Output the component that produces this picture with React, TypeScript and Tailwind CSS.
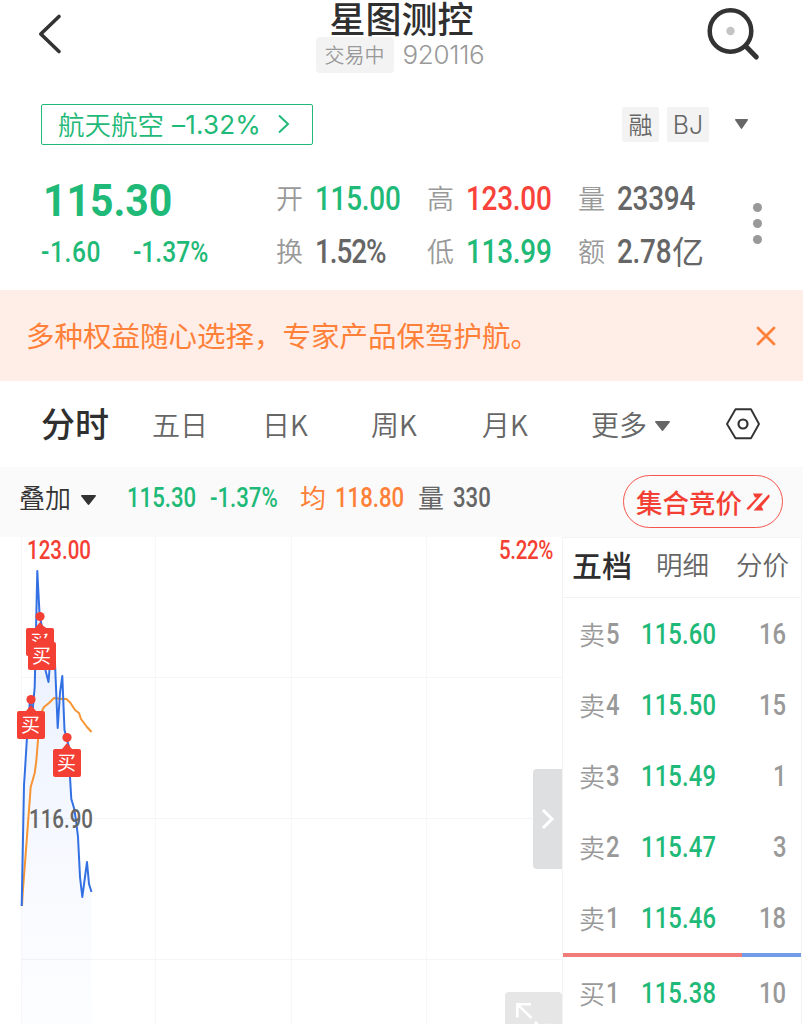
import type { ReactNode } from "react";

type Level = {
  label: string;
  price: string;
  volume: string;
};

type Marker = {
  x: number;
  y: number;
};

const SELL_LEVELS: Level[] = [
  { label: "卖5", price: "115.60", volume: "16" },
  { label: "卖4", price: "115.50", volume: "15" },
  { label: "卖3", price: "115.49", volume: "1" },
  { label: "卖2", price: "115.47", volume: "3" },
  { label: "卖1", price: "115.46", volume: "18" },
];

const BUY_LEVELS: Level[] = [{ label: "买1", price: "115.38", volume: "10" }];

// top-left of each trade marker, in chart coordinates
const MARKERS: Marker[] = [
  { x: 25.5, y: 75 },
  { x: 27.5, y: 89 },
  { x: 16.5, y: 158 },
  { x: 52.5, y: 196 },
];

const PRICE_POINTS =
  "21.7,369 24,248 25,233 27,200 30,163 32.5,175 34.7,150 36,93 37.3,34 39.5,76 42,91 43.5,123 45.7,134 48.5,145 50,126 55,126 57.7,191 60,156 62.3,139 64.5,193 69,210 70,240 71.3,262 74,271 76,283 78,300 80,340 82.3,360 87,325 89,347 91.5,355";

const AVERAGE_POINTS =
  "22,369 22.7,356 25,326 28,286 30.7,250 34.7,236 36.3,224 38,203 41.5,175 44,170 49,166 54,161 62,162 66.5,162 70.5,166 75,173 79,176 81,182 87,190 91.5,195";

function Num({ className = "", children }: { className?: string; children: ReactNode }) {
  return (
    <span className={`inline-block whitespace-nowrap font-['Roboto'] ${className}`}>
      <span className="inline-block origin-left scale-x-[0.82]">{children}</span>
    </span>
  );
}

function Caret({ className = "" }: { className?: string }) {
  return (
    <svg viewBox="0 0 14 10" preserveAspectRatio="none" className={className} fill="currentColor">
      <path d="M.8 0h12.400c.7 0 1 .8.600 1.300L7.700 9.500c-.4.5-1 .5-1.400 0L.2 1.300C-.2.8.100 0 .8 0z" />
    </svg>
  );
}

function Header() {
  return (
    <header className="relative flex h-[84px] flex-col items-center">
      <button type="button" className="absolute left-[36px] top-[12px]">
        <svg width="28" height="44" fill="none" stroke="#333" strokeWidth="3.6" strokeLinecap="round" strokeLinejoin="round">
          <path d="M23 4.500L4.800 22L23 39.500" />
        </svg>
      </button>
      <h1 className="h-[37px] text-[36px] font-medium leading-[35px] text-[#2f2f2f]">星图测控</h1>
      <div className="mr-[2px] flex h-9 items-center gap-[9px]">
        <span className="flex h-9 w-[78px] items-center justify-center rounded bg-[#f3f3f3] text-xl font-[350] text-[#999]">
          交易中
        </span>
        <span className="w-[83px] whitespace-nowrap font-['Inter'] text-[26px] font-light leading-9 tracking-[-0.3px] text-[#999]">
          920116
        </span>
      </div>
      <button type="button" className="absolute left-[704px] top-[5px]">
        <svg width="58" height="58" fill="none" stroke="#333">
          <circle cx="26.500" cy="26" r="20.800" strokeWidth="4.500" />
          <path d="M42 41.500L52.300 52" strokeWidth="5" strokeLinecap="round" />
          <circle cx="26.500" cy="26" r="4.200" fill="#c4c4c4" stroke="none" />
        </svg>
      </button>
    </header>
  );
}

function SectorRow() {
  return (
    <div className="flex h-[80px] items-center pl-[41px]">
      <div className="flex h-[41px] w-[272px] items-center rounded-[2px] border-[1.5px] border-[#1fb978] pl-4 text-[#1fb978]">
        <span className="text-[26.500px] font-[350]">航天航空</span>
        <span className="ml-[8px] w-[92px] whitespace-nowrap font-['Inter'] text-[26px] font-normal tracking-[0.2px]">
          –1.32%
        </span>
        <svg width="14" height="20" className="ml-[13px]" fill="none" stroke="currentColor" strokeWidth="2">
          <path d="M2 1.500L11 10L2 18.500" />
        </svg>
      </div>
      <div className="ml-[309px] flex items-center gap-2 text-[#666]">
        <span className="flex h-[35px] w-[37px] items-center justify-center rounded-[2px] bg-[#f3f3f3] text-2xl font-[350]">
          融
        </span>
        <span className="flex h-[35px] w-[42px] items-center justify-center rounded-[2px] bg-[#f3f3f3] pt-[3px] font-['Inter'] text-[25px] font-light">
          BJ
        </span>
      </div>
      <Caret className="ml-[26px] h-[10px] w-[13px] text-[#666]" />
    </div>
  );
}

function Stat({ label, tone, children }: { label: string; tone: string; children: ReactNode }) {
  return (
    <div className="flex h-[53px] items-center whitespace-nowrap">
      <span className="w-[39px] pb-[1px] text-[27px] font-[350] text-[#999]">{label}</span>
      <span className={`flex items-center ${tone}`}>{children}</span>
    </div>
  );
}

function Quote() {
  return (
    <section className="flex h-[126px] pt-2">
      <div className="w-[276px] text-[#1fb978]">
        <div className="h-[54px] pl-[43px] font-['Roboto'] text-[45px] font-bold leading-[57px]">
          <span className="inline-block origin-left scale-x-[0.91]">115.30</span>
        </div>
        <div className="flex h-[50px] items-center pl-[41px] text-[30px] font-medium">
          <Num className="w-[92px] tracking-[0.7px]">-1.60</Num>
          <Num>-1.37%</Num>
        </div>
      </div>
      <div className="grid h-[106px] grid-cols-[151px_151px_160px] text-[34px] font-medium tracking-[-0.3px]">
        <Stat label="开" tone="text-[#1fb978]"><Num>115.00</Num></Stat>
        <Stat label="高" tone="text-[#f9423a]"><Num>123.00</Num></Stat>
        <Stat label="量" tone="text-[#666]"><Num>23394</Num></Stat>
        <Stat label="换" tone="text-[#666]"><Num className="tracking-[-1.300px]">1.52%</Num></Stat>
        <Stat label="低" tone="text-[#1fb978]"><Num>113.99</Num></Stat>
        <Stat label="额" tone="text-[#666]">
          <Num className="w-[55px]">2.78</Num>
          <span className="pb-1 text-[32px] font-normal leading-10">亿</span>
        </Stat>
      </div>
      <div className="ml-[15px] mt-[31px] flex flex-col gap-[7px]">
        <i className="size-[9px] rounded-full bg-[#999]" />
        <i className="size-[9px] rounded-full bg-[#999]" />
        <i className="size-[9px] rounded-full bg-[#999]" />
      </div>
    </section>
  );
}

function Banner() {
  return (
    <div className="flex h-[91px] items-center justify-between bg-[#ffeee7] pl-[26px] pr-[27px] text-[#ff8038]">
      <p className="text-[28.500px] font-normal">多种权益随心选择，专家产品保驾护航。</p>
      <svg width="20" height="20" fill="none" stroke="currentColor" strokeWidth="2.700" strokeLinecap="round">
        <path d="M2 2L18 18M18 2L2 18" />
      </svg>
    </div>
  );
}

function PeriodTabs() {
  return (
    <nav className="flex h-[86px] items-center whitespace-nowrap text-[28px] font-[350] text-[#666]">
      <span className="ml-[41px] w-[111px] pb-[3px] text-[34px] font-medium text-[#2f2f2f]">分时</span>
      <span className="w-[110px]">五日</span>
      <span className="w-[109px]">日K</span>
      <span className="w-[111px]">周K</span>
      <span className="w-[109px]">月K</span>
      <span className="w-[64px]">更多</span>
      <Caret className="mt-[3px] h-[10px] w-[15px]" />
      <svg width="36" height="34" className="ml-[55px]" fill="none" stroke="#333" strokeWidth="1.900" strokeLinejoin="round">
        <path d="M10.500 2.200H26L34 17L26 31.300H10.500L2 17z" />
        <circle cx="18" cy="17" r="4.500" strokeWidth="2.200" />
      </svg>
    </nav>
  );
}

function InfoStrip() {
  return (
    <div className="flex h-[70px] items-start bg-[#fafafa] pl-[19px]">
      <div className="flex h-[62px] w-[604px] items-center whitespace-nowrap text-[27px] font-medium">
        <span className="w-[62px] pb-[3px] text-[26px] font-[350] text-[#333]">叠加</span>
        <Caret className="mt-[3px] h-[10px] w-[15px] text-[#333]" />
        <Num className="ml-[31px] w-[83px] pt-[1px] text-[#1fb978]">115.30</Num>
        <Num className="w-[90px] pt-[1px] text-[#1fb978]">-1.37%</Num>
        <span className="w-[35px] pb-[3px] text-[26px] font-normal text-[#ff8038]">均</span>
        <Num className="w-[83px] pt-[1px] text-[#ff8038]">118.80</Num>
        <span className="w-[35px] pb-[3px] text-[26px] font-normal text-[#666]">量</span>
        <Num className="pt-[1px] text-[#666]">330</Num>
      </div>
      <button
        type="button"
        className="mt-2 flex h-[53px] w-[160px] items-center rounded-full border border-[#f5554c] pl-3 text-[#f43f34]"
      >
        <span className="whitespace-nowrap text-[26.500px] font-medium">集合竞价</span>
        <svg width="26" height="22" className="ml-[3px]" fill="currentColor">
          <path d="M8 2.500H18L7.500 14.500L4.300 18.300Q2.500 19.500 1.500 17.500L12 6.500H10z" />
          <path d="M23.500 3.600Q25.500 4.500 24.200 6.500L16.500 15.500L18.500 19.500H8.500z" />
        </svg>
      </button>
    </div>
  );
}

function TradeMarker({ x, y }: Marker) {
  return (
    <div className="absolute flex flex-col items-center" style={{ left: x, top: y }}>
      <svg width="28" height="16" className="block" fill="#f43f34">
        <circle cx="14" cy="4.600" r="4.600" />
        <path d="M14 10L19 16H9z" />
      </svg>
      <span className="flex size-7 items-center justify-center rounded-[2px] bg-[#f43f34] pb-[2px] text-[19px] font-normal text-white">
        买
      </span>
    </div>
  );
}

function Chart() {
  return (
    <div className="relative h-[487px] w-[562px] shrink-0 text-[25px] font-medium">
      <svg width="562" height="487" className="block" fill="none">
        <defs>
          <linearGradient id="area" x1="0" y1="0" x2="0" y2="1">
            <stop offset="0" stopColor="#3875f6" stopOpacity="0.12" />
            <stop offset="0.75" stopColor="#3875f6" stopOpacity="0.03" />
            <stop offset="1" stopColor="#3875f6" stopOpacity="0.015" />
          </linearGradient>
        </defs>
        <path d="M21.500 0V487M155.500 0V487M291.500 0V487M426.500 0V487" stroke="#f7f7f8" />
        <path d="M21 140.500H562M21 281.500H562M21 422.500H562" stroke="#f5f5f6" />
        <polygon points={`${PRICE_POINTS} 91.500,487 21.700,487`} fill="url(#area)" />
        <polyline points={AVERAGE_POINTS} stroke="#f79433" strokeWidth="2" strokeLinejoin="round" />
        <polyline points={PRICE_POINTS} stroke="#3370e3" strokeWidth="2" strokeLinejoin="round" />
      </svg>
      {MARKERS.map((marker) => (
        <TradeMarker key={`${marker.x}-${marker.y}`} {...marker} />
      ))}
      <Num className="absolute left-[27px] top-[1px] leading-[26px] text-[#f43f34]">123.00</Num>
      <Num className="absolute left-[499px] top-[1px] w-[56px] leading-[26px] tracking-[-0.4px] text-[#f43f34]">5.22%</Num>
      <Num className="absolute left-[29px] top-[270px] leading-[26px] text-[#666]">116.90</Num>
      <button
        type="button"
        className="absolute left-[533px] top-[232px] flex h-[100px] w-[29px] items-center justify-center rounded-l bg-[#dedfe1]"
      >
        <svg width="14" height="22" fill="none" stroke="#fff" strokeWidth="3">
          <path d="M2 2L11 11L2 20" />
        </svg>
      </button>
      <button type="button" className="absolute left-[505px] top-[455px] h-8 w-[57px] rounded-t bg-[#e6e6e6]">
        <svg width="57" height="32" fill="none" stroke="#fff" strokeWidth="2.500">
          <path d="M26 12.300H12.300V25.500M12.300 12.300L26.500 26M30 30L34 34M40 33H48" />
        </svg>
      </button>
    </div>
  );
}

function LevelRow({ level }: { level: Level }) {
  return (
    <div className="flex h-[71px] items-center whitespace-nowrap pl-[16px] pt-[3px] text-[29px] font-medium">
      <span className="w-[27px] pb-[3px] text-[26px] font-[350] text-[#999]">{level.label[0]}</span>
      <Num className="w-[35px] text-[#999]">{level.label[1]}</Num>
      <Num className="w-[80px] tracking-[0.2px] text-[#1fb978]">{level.price}</Num>
      <span className="w-[65px] text-right font-['Roboto'] text-[#999]">
        <span className="inline-block origin-right scale-x-[0.82]">{level.volume}</span>
      </span>
    </div>
  );
}

function OrderBook() {
  return (
    <aside className="h-[487px] w-[240px] border-x-[1.500px] border-t-[1.500px] border-[#f3f3f3]">
      <div className="flex h-[60px] items-center whitespace-nowrap border-b border-[#f3f3f3] pb-[7px] pl-[9px] text-[26.500px] font-[350] text-[#666]">
        <span className="w-[84px] text-[30px] font-medium text-[#2f2f2f]">五档</span>
        <span className="w-[80px]">明细</span>
        <span>分价</span>
      </div>
      {SELL_LEVELS.map((level) => (
        <LevelRow key={level.label} level={level} />
      ))}
      <div className="flex h-1">
        <div className="w-[179px] bg-[#f17c79]" />
        <div className="flex-1 bg-[#739ce8]" />
      </div>
      {BUY_LEVELS.map((level) => (
        <LevelRow key={level.label} level={level} />
      ))}
    </aside>
  );
}

export default function App() {
  return (
    <div className="h-[1024px] w-[803px] overflow-hidden bg-white font-['Noto_Sans_CJK_SC',sans-serif]">
      <Header />
      <SectorRow />
      <Quote />
      <Banner />
      <PeriodTabs />
      <InfoStrip />
      <main className="flex h-[487px]">
        <Chart />
        <OrderBook />
      </main>
    </div>
  );
}
